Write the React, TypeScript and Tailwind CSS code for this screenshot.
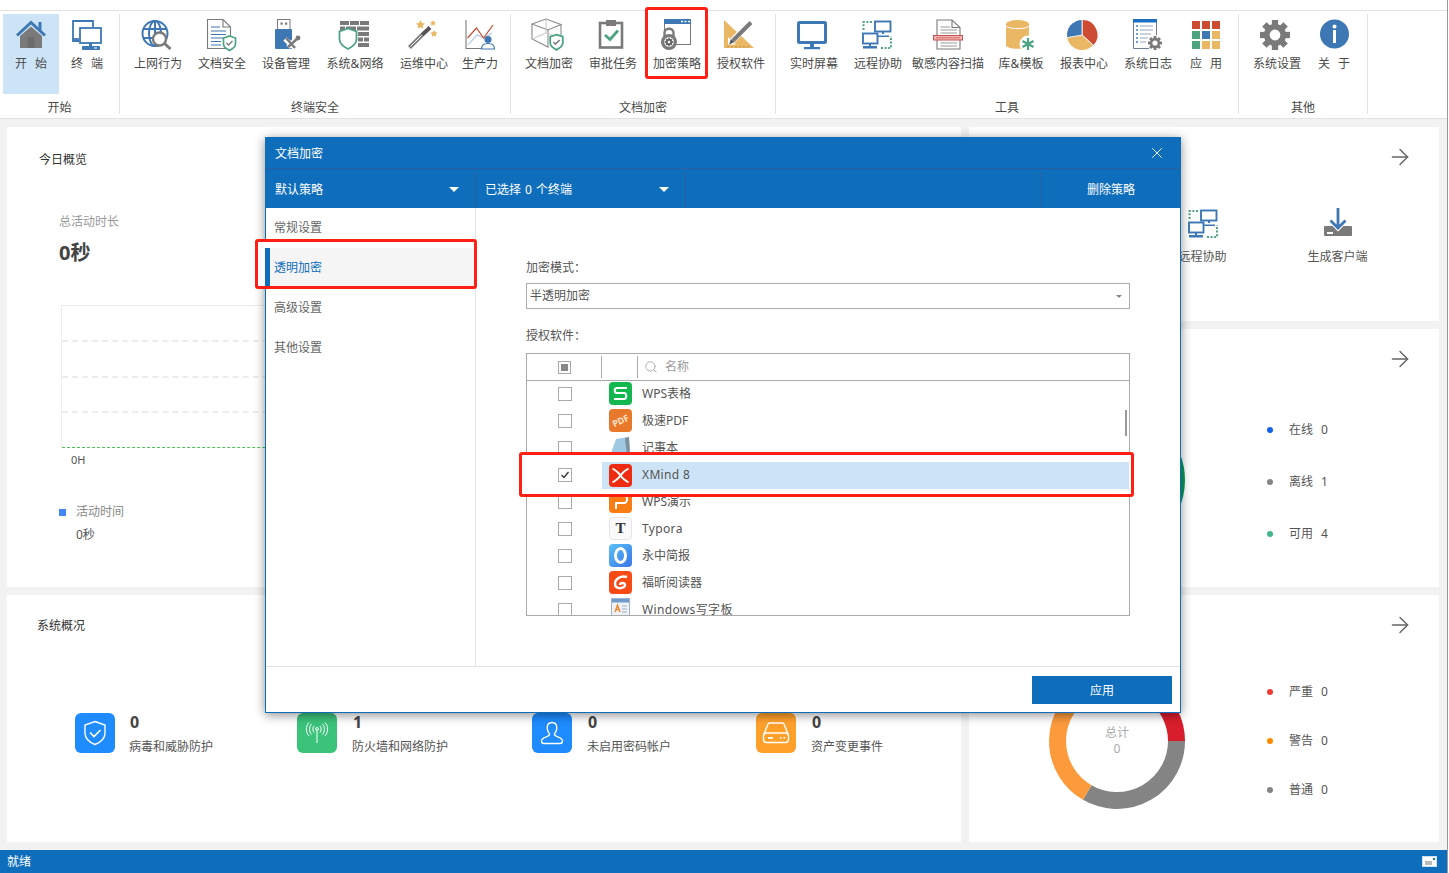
import { ArrowRight, Search, X } from 'lucide-react';
import type { ReactNode } from 'react';

const BLUE = '#3d78b4';
const GRAY = '#7a7a7a';
const ORANGE = '#eab765';
const RED = '#cc4b32';
const GREEN = '#4ea380';

function Svg({ children, size = 32 }: { children: ReactNode; size?: number }) {
  return (
    <svg width={size} height={size} viewBox="0 0 32 32" fill="none" className="overflow-visible">
      {children}
    </svg>
  );
}

function Gear({ cx, cy, r, hole, fill = GRAY }: { cx: number; cy: number; r: number; hole: number; fill?: string }) {
  const w = r * 0.42;
  return (
    <g>
      {[0, 45, 90, 135, 180, 225, 270, 315].map((a) => (
        <rect key={a} x={cx - w / 2} y={cy - r} width={w} height={r} fill={fill} transform={`rotate(${a} ${cx} ${cy})`} />
      ))}
      <circle cx={cx} cy={cy} r={r * 0.74} fill={fill} />
      <circle cx={cx} cy={cy} r={hole} fill="#fff" />
    </g>
  );
}

function MiniShield({ x, y, s = 1 }: { x: number; y: number; s?: number }) {
  return (
    <g transform={`translate(${x} ${y}) scale(${s})`}>
      <path d="M0 -7 L6 -5 V1 C6 4 3 6 0 7.5 C-3 6 -6 4 -6 1 V-5 Z" fill="#fff" stroke={GREEN} strokeWidth="1.7" />
      <path d="M-3 0 L-1 2 L3 -2" stroke={GRAY} strokeWidth="1.4" />
    </g>
  );
}

const HomeIcon = () => (
  <Svg>
    <rect x="23.5" y="4" width="3" height="8" fill={BLUE} />
    <path d="M5 18 L16 8.5 L27 18 V30 H5 Z" fill={GRAY} />
    <rect x="12.5" y="19" width="7" height="11" fill="#6c6c6c" />
    <path d="M2 17.5 L16 4.5 L30 17.5" stroke={BLUE} strokeWidth="3" />
  </Svg>
);

const TerminalIcon = () => (
  <Svg>
    <path d="M8 23 H2 V3 H22 V9" stroke={BLUE} strokeWidth="1.8" />
    <path d="M2 21 H8" stroke={BLUE} strokeWidth="1.8" />
    <rect x="9" y="10" width="21" height="15" stroke={BLUE} strokeWidth="1.8" />
    <rect x="18" y="25" width="3" height="3" fill={BLUE} />
    <rect x="11" y="28" width="18" height="4" rx="1" fill={BLUE} />
    <rect x="23" y="29.5" width="3" height="1" fill="#fff" />
  </Svg>
);

const GlobeIcon = () => (
  <Svg>
    <g stroke={BLUE} strokeWidth="2" transform="translate(-1 0)">
      <circle cx="14" cy="15.5" r="12.5" />
      <ellipse cx="14" cy="15.5" rx="6" ry="12.5" />
      <path d="M14 3 V28 M2 11 H26 M2 20 H26" />
    </g>
    <circle cx="17.5" cy="21" r="6.5" fill="#fff" stroke={GRAY} strokeWidth="2.4" />
    <path d="M22.5 25.5 L28.5 31" stroke={GRAY} strokeWidth="3" />
  </Svg>
);

const DocShieldIcon = () => (
  <Svg>
    <path d="M1.5 1.5 H17 L24.5 9 V30.5 H1.5 Z M17 1.5 V9 H24.5" stroke={GRAY} strokeWidth="1.1" fill="#fff" />
    <path d="M5 9 H14 M5 13 H20 M5 16.5 H20 M5 20 H18 M5 23.5 H15 M5 27 H15" stroke={BLUE} strokeWidth="1.1" />
    <MiniShield x={23.5} y={25} />
  </Svg>
);

const UsbIcon = () => (
  <Svg>
    <rect x="7.5" y="1.5" width="12.5" height="10" fill="#fff" stroke={GRAY} strokeWidth="1" />
    <rect x="10.5" y="4.5" width="2.2" height="2.2" fill={GRAY} />
    <rect x="15" y="4.5" width="2.2" height="2.2" fill={GRAY} />
    <rect x="5" y="11" width="17" height="20" rx="1" fill={BLUE} />
    <path d="M15 21 L25 30 M27 20 L18 29" stroke="#fff" strokeWidth="5" />
    <path d="M16 20 L25 30 M28 20 L18 29" stroke={GRAY} strokeWidth="2.4" />
    <circle cx="28" cy="20" r="2.4" fill={GRAY} />
  </Svg>
);

const FirewallIcon = () => (
  <Svg>
    <g fill={GRAY}>
      <rect x="1" y="3" width="9" height="4" />
      <rect x="11" y="3" width="9" height="4" />
      <rect x="21" y="3" width="9" height="4" />
      <rect x="1" y="8.5" width="5" height="4" />
      <rect x="7" y="8.5" width="10" height="4" />
      <rect x="18" y="8.5" width="12" height="4" />
      <rect x="19" y="14" width="11" height="4" />
      <rect x="19" y="19.5" width="5" height="4" />
      <rect x="25" y="19.5" width="5" height="4" />
      <rect x="19" y="25" width="11" height="4" />
    </g>
    <path d="M9 10.5 L17.5 13.5 V21 C17.5 26 13 29 9 31 C5 29 0.5 26 0.5 21 V13.5 Z" fill="#fff" stroke={GREEN} strokeWidth="1.8" />
  </Svg>
);

const WandIcon = () => (
  <Svg>
    <path d="M1.5 29.5 L14 17" stroke={GRAY} strokeWidth="4" />
    <path d="M2.5 28.5 L13.5 17.5" stroke="#fff" strokeWidth="1" />
    <path d="M14 17 L22 9.5" stroke="#555" strokeWidth="4" />
    <path d="M12.5 2 L14 5 L17 5.5 L14.8 7.6 L15.2 10.6 L12.5 9.2 L9.8 10.6 L10.2 7.6 L8 5.5 L11 5 Z" fill={ORANGE} />
    <path d="M25 2 L26 4 L28 4.3 L26.5 5.7 L26.9 7.7 L25 6.7 L23.1 7.7 L23.5 5.7 L22 4.3 L24 4 Z" fill={ORANGE} />
    <path d="M26 12 L27.2 14.2 L29.6 14.6 L27.9 16.3 L28.2 18.7 L26 17.6 L23.8 18.7 L24.1 16.3 L22.4 14.6 L24.8 14.2 Z" fill={ORANGE} />
  </Svg>
);

const ProductivityIcon = () => (
  <Svg>
    <path d="M2 2 V30.5 H20" stroke={GRAY} strokeWidth="1.1" />
    <path d="M4 27 L13 17 L20 20 L28 15" stroke="#a9c3e0" strokeWidth="1.1" />
    <path d="M3.5 20 L12.5 10 L19.5 20 L29 7" stroke={RED} strokeWidth="1.2" />
    <circle cx="24" cy="21.5" r="3.6" fill={BLUE} />
    <path d="M17.5 31 C17.5 27 20 25.5 24 25.5 C28 25.5 30.5 27 30.5 31 Z" fill="#fff" stroke={BLUE} strokeWidth="1.2" />
  </Svg>
);

const CubeIcon = () => (
  <Svg>
    <g stroke="#8a8a8a" strokeWidth="1.1">
      <path d="M-1 6 L13 1 L28 6.5 L15 12 Z" />
      <path d="M-1 6 V21 L15 29 V12 M28 6.5 V19" />
      <path d="M13 1 V15 L-1 21 M13 15 L27 20" stroke="#c8c8c8" />
    </g>
    <MiniShield x={23.5} y={24} s={1.05} />
  </Svg>
);

const ClipboardIcon = () => (
  <Svg>
    <rect x="3" y="5" width="22" height="24.5" stroke={GRAY} strokeWidth="2.6" />
    <rect x="9" y="2" width="10" height="6" fill={GRAY} />
    <path d="M8 17 L13 21.5 L21 12.5" stroke={GREEN} strokeWidth="2.8" />
  </Svg>
);

const PolicyIcon = () => (
  <Svg>
    <rect x="3.5" y="1.5" width="26" height="25" stroke={GRAY} strokeWidth="1" />
    <rect x="3" y="1" width="27" height="5" fill={BLUE} />
    <path d="M20 3.5 H22 M23.5 3.5 H25.5 M27 3.5 H29" stroke="#fff" strokeWidth="1.3" />
    <path d="M3.5 18 V14.5 C3.5 9.5 12.5 9.5 12.5 14.5 V18" fill="#fff" stroke={GRAY} strokeWidth="2.4" />
    <circle cx="8" cy="24" r="8" fill={GRAY} />
    <circle cx="8" cy="24" r="4.8" fill="#fff" />
    <Gear cx={8} cy={24} r={4.2} hole={1.2} fill="#666" />
  </Svg>
);

const RulerIcon = () => (
  <Svg>
    <path d="M-1 2 L29 30 H-1 Z" fill={ORANGE} />
    <path d="M3 19 L11 26.5 H3 Z" fill="#fff" />
    <path d="M3 29.5 V28 M7 29.5 V28 M11 29.5 V28 M15 29.5 V28 M19 29.5 V28 M23 29.5 V28" stroke="#a07a35" strokeWidth="0.8" />
    <path d="M24.5 5.5 L7 23" stroke="#fff" strokeWidth="6" />
    <path d="M26 4.5 L8 22.5" stroke={GRAY} strokeWidth="4" />
    <path d="M6 21 L9.5 24 L4 26.5 Z" fill="#555" />
  </Svg>
);

const MonitorIcon = () => (
  <Svg>
    <rect x="0.5" y="4.5" width="27" height="20" rx="1" stroke={BLUE} strokeWidth="3" />
    <rect x="12" y="25" width="4" height="4" fill={BLUE} />
    <rect x="6" y="29" width="16" height="2.2" fill={BLUE} />
  </Svg>
);

const RemoteIcon = () => (
  <Svg>
    <g stroke={BLUE} strokeWidth="1.9">
      <rect x="13" y="3.5" width="15.5" height="10" />
      <rect x="1" y="15.5" width="14.5" height="10" />
    </g>
    <path d="M20 13.5 H22 V16 H20 Z M16 17.5 H27 V19 H16 Z M7 25.5 H9 V28 H7 Z M1 28 H15 V30.5 H1 Z" fill={BLUE} />
    <path d="M10 4 H1.5 V13 M19 30 H29 V18" stroke={GREEN} strokeWidth="2" strokeDasharray="2 1.6" />
  </Svg>
);

const ScanIcon = () => (
  <Svg>
    <path d="M5 2 H20 L28 9.5 V31 H5 Z M20 2 V9.5 H28" stroke={GRAY} strokeWidth="1.1" fill="#fff" />
    <path d="M8.5 9 H18 M8.5 12 H25 M8.5 15 H25 M8.5 25 H25 M8.5 28 H25" stroke="#9a9a9a" strokeWidth="1.1" />
    <rect x="1.5" y="17.5" width="29" height="4.5" fill="#f3b9b6" stroke="#c9504a" strokeWidth="1" />
    <path d="M4 19.8 H28" stroke="#c9504a" strokeWidth="0.8" />
  </Svg>
);

const DbIcon = () => (
  <Svg>
    <path d="M1 6 V27 C1 32 24 32 24 27 V6 Z" fill={ORANGE} />
    <ellipse cx="12.5" cy="6" rx="11.5" ry="4" fill={ORANGE} />
    <path d="M1 8 C3 11.5 22 11.5 24 8" stroke="#fff" strokeWidth="1" />
    <circle cx="23" cy="26" r="8.5" fill="#fff" />
    <path d="M23 20 V32 M17.5 23 L28.5 29 M28.5 23 L17.5 29" stroke={GREEN} strokeWidth="2.2" />
  </Svg>
);

const PieIcon = () => (
  <Svg>
    <path d="M14.5 17 L14.5 2 A15 15 0 0 1 25.65 27.04 Z" fill={RED} />
    <path d="M14 17 L25.15 27.04 A15 15 0 0 1 -0.77 19.6 Z" fill={ORANGE} />
    <path d="M14 17 L-0.77 19.6 A15 15 0 0 1 14 2 Z" fill={BLUE} />
    <path d="M14 2 V17 L25.15 27.04 M14 17 L-0.77 19.6" stroke="#fff" strokeWidth="0.8" />
  </Svg>
);

const LogIcon = () => (
  <Svg>
    <path d="M1.5 2 H24.5 V19 M17 30.5 H1.5 V2" stroke="#6d7f92" strokeWidth="1" />
    <rect x="1" y="1" width="24" height="3.5" fill="#1d6fc0" />
    <path d="M4 8 H6 M8 8 H21 M4 12 H6 M8 12 H21 M4 16 H6 M8 16 H19 M4 20 H6 M8 20 H16 M4 24 H6 M8 24 H14" stroke="#8fa6be" strokeWidth="1" />
    <path d="M4 8 H6 M4 12 H6 M4 16 H6 M4 20 H6 M4 24 H6" stroke="#1d6fc0" strokeWidth="1" />
    <circle cx="23" cy="25" r="8" fill="#fff" />
    <Gear cx={23} cy={25} r={7} hole={2.6} />
  </Svg>
);

const AppsIcon = () => {
  const cells = [RED, RED, RED, GREEN, BLUE, ORANGE, GREEN, ORANGE, ORANGE];
  return (
    <Svg>
      {cells.map((c, i) => (
        <rect key={i} x={2 + (i % 3) * 10} y={3 + Math.floor(i / 3) * 10} width="8" height="8" fill={c} />
      ))}
    </Svg>
  );
};

const GearIcon = () => (
  <Svg>
    <Gear cx={14} cy={17} r={15} hole={5.4} />
  </Svg>
);

const InfoIcon = () => (
  <Svg>
    <circle cx="16.5" cy="16" r="14.5" fill={BLUE} />
    <circle cx="16.5" cy="8.5" r="2" fill="#fff" />
    <rect x="15" y="12" width="3" height="13" fill="#fff" />
  </Svg>
);

const DownloadIcon = () => (
  <Svg>
    <rect x="2" y="19" width="28" height="10" rx="1" fill={GRAY} />
    <rect x="5" y="25" width="6" height="2" fill="#fff" />
    <path d="M16 1 V21 M8 13 L16 21 L24 13" stroke="#fff" strokeWidth="5" />
    <path d="M16 1 V21 M8.5 13.5 L16 21 L23.5 13.5" stroke={BLUE} strokeWidth="2.8" />
  </Svg>
);

function RibbonItem({ label, icon, width, active, marked }: { label: string; icon: ReactNode; width: string; active?: boolean; marked?: boolean }) {
  return (
    <div className={`relative flex h-[80px] flex-col items-center pt-[4px] ${width} ${active ? 'bg-[#cde4f7]' : ''}`}>
      {marked && <div className="absolute top-[-7px] left-0 h-[72px] w-[63px] rounded-[3px] border-[3px] border-[#ff1f14] bg-white" />}
      <div className="relative h-[32px] w-[32px]">{icon}</div>
      <div className="relative mt-[6px] text-xs leading-4 whitespace-nowrap text-[#4a4a4a] [word-spacing:5px]">{label}</div>
    </div>
  );
}

function RibbonGroup({ title, width, pad, children }: { title: string; width: string; pad: string; children: ReactNode }) {
  return (
    <div className={`mt-[3px] flex h-[100px] flex-col border-r border-[#e2e2e2] ${width}`}>
      <div className={`flex h-[86px] shrink-0 ${pad}`}>{children}</div>
      <div className="text-center text-xs leading-4 text-[#4a4a4a]">{title}</div>
    </div>
  );
}

function Ribbon() {
  return (
    <div className="flex h-[109px] shrink-0 border-y border-[#e2e2e2] bg-white">
      <RibbonGroup title="开始" width="w-[120px]" pad="pl-[3px]">
        <RibbonItem label="开 始" icon={<HomeIcon />} width="w-[56px]" active />
        <RibbonItem label="终 端" icon={<TerminalIcon />} width="w-[56px]" />
      </RibbonGroup>
      <RibbonGroup title="终端安全" width="w-[391px]" pad="pl-[6px]">
        <RibbonItem label="上网行为" icon={<GlobeIcon />} width="w-[64px]" />
        <RibbonItem label="文档安全" icon={<DocShieldIcon />} width="w-[64px]" />
        <RibbonItem label="设备管理" icon={<UsbIcon />} width="w-[64px]" />
        <RibbonItem label="系统&网络" icon={<FirewallIcon />} width="w-[74px]" />
        <RibbonItem label="运维中心" icon={<WandIcon />} width="w-[64px]" />
        <RibbonItem label="生产力" icon={<ProductivityIcon />} width="w-[48px]" />
      </RibbonGroup>
      <RibbonGroup title="文档加密" width="w-[265px]" pad="pl-[6px]">
        <RibbonItem label="文档加密" icon={<CubeIcon />} width="w-[64px]" />
        <RibbonItem label="审批任务" icon={<ClipboardIcon />} width="w-[64px]" />
        <RibbonItem label="加密策略" icon={<PolicyIcon />} width="w-[64px]" marked />
        <RibbonItem label="授权软件" icon={<RulerIcon />} width="w-[64px]" />
      </RibbonGroup>
      <RibbonGroup title="工具" width="w-[463px]" pad="pl-[6px]">
        <RibbonItem label="实时屏幕" icon={<MonitorIcon />} width="w-[64px]" />
        <RibbonItem label="远程协助" icon={<RemoteIcon />} width="w-[64px]" />
        <RibbonItem label="敏感内容扫描" icon={<ScanIcon />} width="w-[76px]" />
        <RibbonItem label="库&模板" icon={<DbIcon />} width="w-[70px]" />
        <RibbonItem label="报表中心" icon={<PieIcon />} width="w-[56px]" />
        <RibbonItem label="系统日志" icon={<LogIcon />} width="w-[72px]" />
        <RibbonItem label="应 用" icon={<AppsIcon />} width="w-[44px]" />
      </RibbonGroup>
      <RibbonGroup title="其他" width="w-[129px]" pad="pl-[6px]">
        <RibbonItem label="系统设置" icon={<GearIcon />} width="w-[64px]" />
        <RibbonItem label="关 于" icon={<InfoIcon />} width="w-[50px]" />
      </RibbonGroup>
    </div>
  );
}

function OverviewCard() {
  return (
    <div className="h-[460px] bg-white pt-[23px]">
      <div className="pl-8 text-xs leading-5 text-[#333]">今日概览</div>
      <div className="mt-[42px] pl-[52px] text-xs leading-5 text-[#999]">总活动时长</div>
      <div className="mt-[7px] pl-[52px] text-xl leading-7 font-bold text-[#444]">0秒</div>
      <div className="mt-[38px] ml-[54px] flex h-[143px] w-[860px] flex-col border-t border-l border-[#ececec]">
        <div className="flex-1 border-b-2 border-dashed border-[#ececec]" />
        <div className="flex-1 border-b-2 border-dashed border-[#ececec]" />
        <div className="flex-1 border-b-2 border-dashed border-[#ececec]" />
        <div className="flex-1 border-b border-dashed border-[#4cc159]" />
      </div>
      <div className="mt-1 pl-16 text-[11px] leading-4 text-[#555]">0H</div>
      <div className="mt-[34px] flex items-center pl-[52px] text-xs leading-5 text-[#888]">
        <span className="mr-[10px] h-[7px] w-[7px] bg-[#4287f5]" />
        活动时间
      </div>
      <div className="mt-[3px] pl-[69px] text-xs leading-5 text-[#555]">0秒</div>
    </div>
  );
}

function Stat({ value, label, width, bg, textGap, children }: { value: string; label: string; width: string; bg: string; textGap: string; children: ReactNode }) {
  return (
    <div className={`flex ${width}`}>
      <div className={`flex h-10 w-10 items-center justify-center rounded-md ${bg}`}>{children}</div>
      <div className={`-mt-px ${textGap}`}>
        <div className="pl-px text-base leading-5 font-bold text-[#444]">{value}</div>
        <div className="mt-[5px] text-xs leading-5 text-[#555]">{label}</div>
      </div>
    </div>
  );
}

function SystemCard() {
  return (
    <div className="h-[247px] bg-white pt-[21px]">
      <div className="pl-[30px] text-xs leading-5 text-[#333]">系统概况</div>
      <div className="mt-[77px] flex pl-[68px]">
        <Stat value="0" label="病毒和威胁防护" width="w-[222px]" bg="bg-[#1e8bff]" textGap="ml-[14px]">
          <svg width="24" height="26" viewBox="0 0 24 26" fill="none" stroke="#fff" strokeWidth="1.4">
            <path d="M12 1.5 L22 5 V13 C22 19 17 22.5 12 24.5 C7 22.5 2 19 2 13 V5 Z" />
            <path d="M7 12.5 L11 16.5 L17.5 10" strokeWidth="1.6" />
          </svg>
        </Stat>
        <Stat value="1" label="防火墙和网络防护" width="w-[235px]" bg="bg-[#3bc37a]" textGap="ml-[15px]">
          <svg width="24" height="24" viewBox="0 0 24 24" fill="none" stroke="#fff" strokeWidth="1">
            <circle cx="12" cy="8" r="1.4" />
            <path d="M12 9.5 V22" />
            <path d="M9 5 C7.5 7 7.5 9.5 9 11.5 M15 5 C16.5 7 16.5 9.5 15 11.5 M6.5 3 C4 6 4 10.5 6.5 13.5 M17.5 3 C20 6 20 10.5 17.5 13.5 M4 1.5 C0.5 5.5 0.5 11 4 15 M20 1.5 C23.5 5.5 23.5 11 20 15" />
          </svg>
        </Stat>
        <Stat value="0" label="未启用密码帐户" width="w-[224px]" bg="bg-[#1e8bff]" textGap="ml-[15px]">
          <svg width="24" height="24" viewBox="0 0 24 24" fill="none" stroke="#fff" strokeWidth="1.4">
            <path d="M12 1.5 C7.5 1.5 6.5 5.5 7.5 9 C8 11 9.5 12 9.5 13.5 C9.5 16 1.5 16 1.5 20 C1.5 22 3 22.5 4 22.5 H20 C21 22.5 22.5 22 22.5 20 C22.5 16 14.5 16 14.5 13.5 C14.5 12 16 11 16.5 9 C17.5 5.5 16.5 1.5 12 1.5 Z" />
          </svg>
        </Stat>
        <Stat value="0" label="资产变更事件" width="w-[150px]" bg="bg-[#ffa02b]" textGap="ml-[15px]">
          <svg width="28" height="22" viewBox="0 0 28 22" fill="none" stroke="#fff" strokeWidth="1.4">
            <path d="M2 12 L6 2 C6.4 1.2 7 1 8 1 H20 C21 1 21.6 1.2 22 2 L26 12" />
            <rect x="1.5" y="11" width="25" height="9.5" rx="3" />
            <path d="M6 15.8 H11 M18 15.8 H19.5 M21.5 15.8 H23" strokeWidth="1.8" />
          </svg>
        </Stat>
      </div>
    </div>
  );
}

function Legend({ color, label, value, gap }: { color: string; label: string; value: string; gap: string }) {
  return (
    <div className={`flex items-center text-xs leading-5 text-[#555] ${gap}`}>
      <span className={`mr-[16px] h-[6px] w-[6px] rounded-full ${color}`} />
      <span>{label}</span>
      <span className="ml-2">{value}</span>
    </div>
  );
}

function CardHead() {
  return (
    <div className="flex h-[60px] items-center justify-end pr-[26px]">
      <ArrowRight size={26} strokeWidth={1.35} className="text-[#666]" />
    </div>
  );
}

function RightColumn() {
  return (
    <div className="flex w-[470px] flex-col gap-2">
      <div className="h-[194px] bg-white">
        <CardHead />
        <div className="mt-[20px] ml-[166px] flex">
          <div className="flex w-[135px] flex-col items-center">
            <div className="translate-x-[1px]">
              <RemoteIcon />
            </div>
            <div className="mt-[8px] text-xs leading-5 text-[#555]">远程协助</div>
          </div>
          <div className="flex w-[135px] flex-col items-center">
            <DownloadIcon />
            <div className="mt-[8px] text-xs leading-5 text-[#555]">生成客户端</div>
          </div>
        </div>
      </div>
      <div className="h-[258px] bg-white">
        <CardHead />
        <div className="mt-[23px] flex items-center pl-[80px]">
          <svg width="136" height="136" viewBox="0 0 136 136" fill="none">
            <circle cx="68" cy="68" r="59.5" stroke="#0a9e58" strokeWidth="17" />
          </svg>
          <div className="ml-[82px] flex flex-col pt-[4px]">
            <Legend color="bg-[#1463f0]" label="在线" value="0" gap="" />
            <Legend color="bg-[#848484]" label="离线" value="1" gap="mt-8" />
            <Legend color="bg-[#46b78a]" label="可用" value="4" gap="mt-8" />
          </div>
        </div>
      </div>
      <div className="h-[247px] bg-white">
        <CardHead />
        <div className="mt-[18px] flex items-center pl-[80px]">
          <div className="relative h-[136px] w-[136px]">
            <svg width="136" height="136" viewBox="0 0 136 136" fill="none" strokeWidth="17">
              <path d="M127.5 68 A59.5 59.5 0 0 1 38.25 119.5" stroke="#848484" />
              <path d="M38.25 119.5 A59.5 59.5 0 0 1 38.25 16.5" stroke="#fd9a3c" />
              <path d="M38.25 16.5 A59.5 59.5 0 0 1 127.5 68" stroke="#d81e2c" />
            </svg>
            <div className="absolute inset-x-0 top-[52px] text-center text-xs leading-4 text-[#aaa]">
              <div>总计</div>
              <div>0</div>
            </div>
          </div>
          <div className="ml-[82px] flex flex-col">
            <Legend color="bg-[#ef3b32]" label="严重" value="0" gap="" />
            <Legend color="bg-[#ff8c00]" label="警告" value="0" gap="mt-[29px]" />
            <Legend color="bg-[#848484]" label="普通" value="0" gap="mt-[29px]" />
          </div>
        </div>
      </div>
    </div>
  );
}

function AppBadge({ bg, children }: { bg: string; children?: ReactNode }) {
  return <div className={`flex h-[23px] w-[23px] shrink-0 items-center justify-center overflow-hidden rounded-[4px] ${bg}`}>{children}</div>;
}

const XMindBadge = () => (
  <AppBadge bg="bg-[#ee2c12]">
    <svg width="23" height="23" viewBox="0 0 23 23" fill="none" stroke="#fff" strokeWidth="1.7">
      <path d="M3.5 4.5 C8 7 10 9 11.5 11.5 C13 9 15 7 19.5 4.5 M3.5 18.5 C8 16 10 14 11.5 11.5 C13 14 15 16 19.5 18.5" />
    </svg>
  </AppBadge>
);

const rows: { name: string; wide?: boolean; badge: ReactNode }[] = [
  {
    name: 'WPS表格',
    badge: (
      <AppBadge bg="bg-[#12b84f]">
        <svg width="23" height="23" viewBox="0 0 23 23" fill="none" stroke="#fff" strokeWidth="2">
          <path d="M18 6 H8 C5 6 5 11 8 11 H15 C18 11 18 17 15 17 H5" />
        </svg>
      </AppBadge>
    ),
  },
  {
    name: '极速PDF',
    badge: (
      <AppBadge bg="bg-[#e8792a]">
        <span className="-rotate-[25deg] text-[9px] leading-none font-bold text-[#ffe2c8]">PDF</span>
      </AppBadge>
    ),
  },
  {
    name: '记事本',
    badge: (
      <svg width="23" height="23" viewBox="0 0 23 23">
        <path d="M1 20 L7 3 L20 1 L21 19 L8 22 Z" fill="#9fc8e2" />
        <path d="M20 1 L21 19 L18 20 L16 2 Z" fill="#7d8f9c" />
      </svg>
    ),
  },
  { name: 'XMind 8', wide: true, badge: <XMindBadge /> },
  {
    name: 'WPS演示',
    badge: (
      <AppBadge bg="bg-[#f97d12]">
        <svg width="23" height="23" viewBox="0 0 23 23" fill="none" stroke="#fff" strokeWidth="2">
          <path d="M5 5.5 H15 C19 5.5 19 13 15 13 H7 V19" />
        </svg>
      </AppBadge>
    ),
  },
  {
    name: 'Typora',
    wide: true,
    badge: (
      <AppBadge bg="bg-[#fafafa] border border-[#e6e6e6]">
        <span className="font-['Liberation_Serif',serif] text-[15px] leading-none font-bold text-[#333]">T</span>
      </AppBadge>
    ),
  },
  {
    name: '永中简报',
    badge: (
      <AppBadge bg="bg-gradient-to-br from-[#5cc0f5] to-[#3b74e8]">
        <svg width="23" height="23" viewBox="0 0 23 23" fill="none" stroke="#fff" strokeWidth="3">
          <ellipse cx="11.5" cy="11.5" rx="5" ry="7" />
        </svg>
      </AppBadge>
    ),
  },
  {
    name: '福昕阅读器',
    badge: (
      <AppBadge bg="bg-[#f74a14]">
        <svg width="23" height="23" viewBox="0 0 23 23" fill="none" stroke="#fff" strokeWidth="2.4">
          <path d="M18 6 C12 4 6 8 6 13 C6 17 11 18.5 15 16 C17 14.5 16 11.5 13 12 C11.5 12.2 11 13 11 14" />
        </svg>
      </AppBadge>
    ),
  },
  {
    name: 'Windows写字板',
    wide: true,
    badge: (
      <svg width="23" height="23" viewBox="0 0 23 23">
        <rect x="2.5" y="0" width="18" height="23" fill="#eef2f7" stroke="#9fb2c8" />
        <rect x="3" y="0.5" width="17" height="4" fill="#6f9ccb" />
        <path d="M6 14 L8.5 7 L11 14 M7 11.5 H10" fill="none" stroke="#e98a2e" strokeWidth="1.4" />
        <path d="M13 8 H18 M13 11 H18 M13 14 H18" stroke="#9fb2c8" />
      </svg>
    ),
  },
];

function Box({ checked }: { checked?: boolean }) {
  return (
    <div className="flex h-[14px] w-[14px] items-center justify-center border border-[#aaa] bg-white">
      {checked && (
        <svg width="10" height="10" viewBox="0 0 10 10" fill="none" stroke="#333" strokeWidth="1.3">
          <path d="M1.5 5 L4 7.5 L8.5 2" />
        </svg>
      )}
    </div>
  );
}

function SoftwareTable() {
  return (
    <div className="relative mt-[7px] h-[263px] border border-[#aaa] text-xs leading-5 text-[#555]">
      <div className="flex h-[27px] items-center border-b border-[#aaa]">
        <div className="flex h-[22px] w-[75px] items-center border-r border-[#aaa] pl-[31px]">
          <div className="flex h-[13px] w-[13px] items-center justify-center border border-[#aaa]">
            <span className="h-[7px] w-[7px] bg-[#888]" />
          </div>
        </div>
        <div className="h-[22px] w-[36px] border-r border-[#aaa]" />
        <Search size={14} strokeWidth={1.6} className="ml-[6px] text-[#aaa]" />
        <span className="ml-[7px] text-[#999]">名称</span>
      </div>
      <div className="-mt-px h-[235px] overflow-hidden">
        {rows.map((row) => (
          <div key={row.name} className="flex h-[27px] items-center">
            <div className="w-[75px] pl-[31px]">
              <Box />
            </div>
            <div className="ml-[7px] h-[23px] w-[23px]">{row.badge}</div>
            <span className={`ml-[10px] whitespace-nowrap ${row.wide ? 'tracking-[0.35px]' : ''}`}>{row.name}</span>
          </div>
        ))}
      </div>
      <div className="absolute top-[56px] right-[2px] h-[26px] w-[2px] bg-[#999]" />
    </div>
  );
}

function Caret() {
  return <span className="h-0 w-0 border-x-[5px] border-t-[5px] border-x-transparent border-t-white" />;
}

function EncryptDialog() {
  const sideItem = 'flex h-10 items-center pl-2 text-xs text-[#666]';
  return (
    <div className="absolute top-[137px] left-[265px] flex h-[576px] w-[916px] flex-col border border-[#0f6ebc] bg-white shadow-[0_2px_10px_rgba(0,0,0,0.45)]">
      <div className="flex h-[31px] shrink-0 items-center justify-between border-b border-[#2a5f9f] bg-[#0f6ebc] pr-[14px] pl-[9px] text-xs text-white">
        <span className="mt-[2px]">文档加密</span>
        <X size={18} strokeWidth={1.2} />
      </div>
      <div className="flex h-[39px] shrink-0 bg-[#0f6ebc] pt-[2px] text-xs text-white">
        <div className="flex w-[210px] items-center justify-between border-r border-[#2a5f9f] pr-[16px] pl-[9px]">
          <span>默认策略</span>
          <Caret />
        </div>
        <div className="flex w-[210px] items-center justify-between border-r border-[#2a5f9f] pr-[16px] pl-[9px]">
          <span className="[word-spacing:1px]">已选择 0 个终端</span>
          <Caret />
        </div>
        <div className="w-[356px] border-r border-[#2a5f9f]" />
        <div className="flex flex-1 items-center justify-center">删除策略</div>
      </div>
      <div className="flex min-h-0 flex-1">
        <div className="w-[210px] shrink-0 border-r border-[#e2e2e2]">
          <div className={sideItem}>常规设置</div>
          <div className="h-10" />
          <div className={sideItem}>高级设置</div>
          <div className={sideItem}>其他设置</div>
        </div>
        <div className="flex-1 px-[50px] pt-[50px] text-xs leading-5 text-[#555]">
          <div>加密模式：</div>
          <div className="mt-[5px] flex h-[26px] items-center justify-between border border-[#aaa] pr-[7px] pl-[3px]">
            <span>半透明加密</span>
            <span className="h-0 w-0 border-x-[3px] border-t-[3px] border-x-transparent border-t-[#888]" />
          </div>
          <div className="mt-[17px]">授权软件：</div>
          <SoftwareTable />
        </div>
      </div>
      <div className="flex h-[46px] shrink-0 items-start justify-end border-t border-[#e2e2e2] pt-[9px] pr-2">
        <button className="h-[28px] w-[140px] bg-[#0f6ebc] pt-[2px] text-xs text-white">应用</button>
      </div>

      {/* red marks drawn on the shot */}
      <div className="absolute top-[101px] left-[-11px] h-[50px] w-[222px] rounded-[3px] border-[3px] border-[#ff1f14] bg-white pt-[6px] pl-[7px]">
        <div className="flex h-[38px] items-center border-l-[5px] border-[#0f6ebc] bg-[#f5f5f5] pt-[2px] pl-1 text-xs text-[#0f6ebc]">透明加密</div>
      </div>
      <div className="absolute top-[314px] left-[253px] h-[45px] w-[615px] rounded-[3px] border-[3px] border-[#ff1f14] bg-white pt-[7px] text-xs text-[#555]">
        <div className="flex h-[27px] items-center">
          <div className="w-[80px] pb-[2px] pl-[36px]">
            <Box checked />
          </div>
          <div className="flex h-[27px] w-[527px] items-center bg-[#cde4f7] pl-[7px]">
            <XMindBadge />
            <span className="mb-[2px] ml-[10px] tracking-[0.35px]">XMind 8</span>
          </div>
        </div>
      </div>
    </div>
  );
}

export default function App() {
  return (
    <div className="relative mr-px flex h-[873px] flex-col overflow-hidden border-r border-[#999] bg-[#f2f2f2] font-['Noto_Sans','Noto_Sans_CJK_SC',sans-serif]">
      <div className="h-[10px] shrink-0 bg-white" />
      <Ribbon />
      <div className="flex flex-1 gap-2 pt-2 pl-[7px]">
        <div className="flex w-[954px] flex-col gap-2">
          <OverviewCard />
          <SystemCard />
        </div>
        <RightColumn />
      </div>
      <div className="flex h-[23px] shrink-0 items-center justify-between bg-[#0f6ebc] pr-[10px] pl-[7px] text-xs text-white">
        <span>就绪</span>
        <svg width="15" height="11" viewBox="0 0 15 11">
          <rect x="0.5" y="0.5" width="14" height="10" fill="#fff" stroke="#cfe0f0" />
          <path d="M3 6 H10 M3 8 H10" stroke="#555" strokeWidth="0.8" />
          <rect x="11" y="2" width="2" height="2" fill="#0f6ebc" />
        </svg>
      </div>
      <EncryptDialog />
    </div>
  );
}
